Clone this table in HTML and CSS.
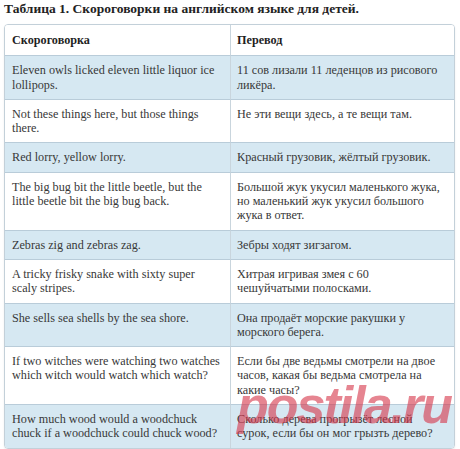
FILE: index.html
```html
<!DOCTYPE html>
<html lang="ru">
<head>
<meta charset="utf-8">
<title>Скороговорки</title>
<link rel="stylesheet" href="styles.css">
</head>
<body>
<div class="page">
  <h1 class="caption">Таблица 1. Скороговорки на английском языке для детей.</h1>
  <div class="table-wrap">
    <table class="tw">
      <colgroup><col class="c1"><col class="c2"></colgroup>
      <thead>
        <tr><th>Скороговорка</th><th>Перевод</th></tr>
      </thead>
      <tbody>
        <tr class="alt"><td>Eleven owls licked eleven little liquor ice<br>lollipops.</td><td>11 сов лизали 11 леденцов из рисового<br>ликёра.</td></tr>
        <tr><td>Not these things here, but those things<br>there.</td><td>Не эти вещи здесь, а те вещи там.</td></tr>
        <tr class="alt"><td>Red lorry, yellow lorry.</td><td>Красный грузовик, жёлтый грузовик.</td></tr>
        <tr><td>The big bug bit the little beetle, but the<br>little beetle bit the big bug back.</td><td>Большой жук укусил маленького жука,<br>но маленький жук укусил большого<br>жука в ответ.</td></tr>
        <tr class="alt"><td>Zebras zig and zebras zag.</td><td>Зебры ходят зигзагом.</td></tr>
        <tr><td>A tricky frisky snake with sixty super<br>scaly stripes.</td><td>Хитрая игривая змея с 60<br>чешуйчатыми полосками.</td></tr>
        <tr class="alt"><td>She sells sea shells by the sea shore.</td><td>Она продаёт морские ракушки у<br>морского берега.</td></tr>
        <tr><td>If two witches were watching two watches<br>which witch would watch which watch?</td><td>Если бы две ведьмы смотрели на двое<br>часов, какая бы ведьма смотрела на<br>какие часы?</td></tr>
        <tr class="alt last"><td>How much wood would a woodchuck<br>chuck if a woodchuck could chuck wood?</td><td>Сколько дерева прогрызёт лесной<br>сурок, если бы он мог грызть дерево?</td></tr>
      </tbody>
    </table>
    <div class="watermark">postila.ru</div>
  </div>
</div>
</body>
</html>
```
FILE: styles.css
```css
html, body {
  margin: 0;
  padding: 0;
  background: #ffffff;
}
.page {
  padding: 0 0 0 4px;
  font-family: "Liberation Serif", "Times New Roman", serif;
}
.caption {
  margin: 0 0 6px 0;
  font-size: 13.5px;
  line-height: 18px;
  font-weight: bold;
  color: #222222;
}
.table-wrap {
  position: relative;
  width: 451px;
  box-sizing: border-box;
  border: 1px solid #c3d0d9;
  border-radius: 4px;
  overflow: hidden;
  box-shadow: 0 1px 2px rgba(0, 0, 0, 0.08);
}
.tw {
  width: 449px;
  table-layout: fixed;
  border-collapse: separate;
  border-spacing: 0;
  font-size: 12.2px;
  line-height: 14.3px;
  color: #383838;
}
.c1 { width: 226px; }
.c2 { width: 223px; }
.tw th,
.tw td {
  text-align: left;
  vertical-align: top;
  white-space: nowrap;
  border-bottom: 1px solid #b9ccd9;
  padding: 7px 4px 7px 8px;
}
.tw th {
  padding-top: 8px;
  padding-bottom: 8px;
  font-weight: bold;
  color: #1f1f1f;
  background: #ffffff;
}
.tw th:first-child,
.tw td:first-child {
  border-right: 1px solid #c9d5dd;
  padding-left: 7px;
}
.tw th + th,
.tw td + td {
  padding-left: 6px;
}
.tw tr.alt td {
  background: #d6e8f2;
}
.tw tr.last td {
  border-bottom: none;
}
.watermark {
  position: absolute;
  left: 232px;
  top: 354px;
  font-family: "Liberation Sans", Arial, sans-serif;
  font-size: 52px;
  line-height: 1;
  font-weight: bold;
  font-style: italic;
  letter-spacing: -2px;
  color: rgba(214, 52, 72, 0.6);
  pointer-events: none;
}
```
